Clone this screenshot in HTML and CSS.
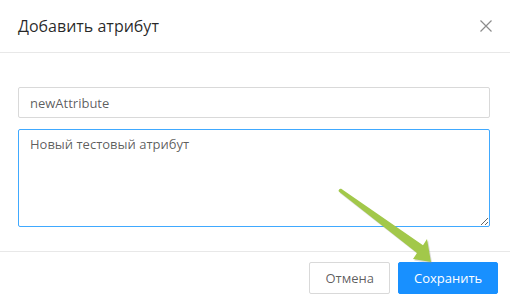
FILE: index.html
```html
<!DOCTYPE html>
<html lang="ru">
<head>
<meta charset="utf-8">
<link rel="stylesheet" href="styles.css">
</head>
<body>
<div class="modal">
  <div class="modal-header">
    <div class="modal-title">Добавить атрибут</div>
    <button class="modal-close" aria-label="Закрыть">
      <svg width="12" height="12" viewBox="0 0 12 12"><path d="M0.5 0.5L11.5 11.5M11.5 0.5L0.5 11.5" stroke="#8c8c8c" stroke-width="1.2" fill="none"/></svg>
    </button>
  </div>
  <div class="modal-body">
    <input class="field" type="text" value="newAttribute">
    <textarea class="field area">Новый тестовый атрибут</textarea>
  </div>
  <div class="modal-footer">
    <button class="btn">Отмена</button>
    <button class="btn btn-primary">Сохранить</button>
  </div>
  <svg class="arrow" width="510" height="299" viewBox="0 0 510 299">
    <path transform="translate(1.2,1.6)" opacity="0.3" fill="#8a8a8a" d="M341.2 188.8 L423 245.2 L427 239 L431 262 L413 259 L417 252.9 L338.8 191.6 A2 2 0 0 1 341.2 188.8 Z"/>
    <path fill="#a2c84a" d="M341.2 188.8 L423 245.2 L427 239 L431 262 L413 259 L417 252.9 L338.8 191.6 A2 2 0 0 1 341.2 188.8 Z"/>
  </svg>
</div>
</body>
</html>
```
FILE: styles.css
```css
html, body {
  margin: 0;
  padding: 0;
  background: #fff;
}
body {
  font-family: "Open Sans", "Noto Sans", sans-serif;
  font-size: 13px;
  color: rgba(0, 0, 0, 0.65);
}
.modal {
  position: relative;
  width: 510px;
  height: 299px;
  display: flex;
  flex-direction: column;
}
.modal-header {
  height: 53px;
  box-sizing: border-box;
  border-bottom: 1px solid #e8e8e8;
  display: flex;
  align-items: center;
  justify-content: space-between;
  padding: 0 18px 0 18px;
}
.modal-title {
  font-size: 16px;
  color: rgba(0, 0, 0, 0.85);
}
.modal-close {
  border: 0;
  background: none;
  padding: 0;
  width: 12px;
  height: 12px;
  display: flex;
}
.modal-body {
  padding: 34px 20px 0 18px;
  display: flex;
  flex-direction: column;
  gap: 11px;
  height: 199px;
  box-sizing: border-box;
  border-bottom: 1px solid #e8e8e8;
}
.field {
  font-family: inherit;
  font-size: 13px;
  color: rgba(0, 0, 0, 0.65);
  border: 1px solid #d9d9d9;
  border-radius: 2px;
  box-sizing: border-box;
  margin: 0;
  outline: none;
  background: #fff;
}
input.field {
  height: 31px;
  padding: 0 11px;
}
.area {
  height: 98px;
  padding: 4px 11px;
  border-color: #40a9ff;
  resize: vertical;
  line-height: 20px;
}
.modal-footer {
  flex: 1;
  display: flex;
  justify-content: flex-end;
  align-items: flex-start;
  gap: 8px;
  padding: 10px 12px 0 0;
}
.btn {
  font-family: inherit;
  font-size: 13px;
  height: 32px;
  padding: 0 15px;
  border: 1px solid #d9d9d9;
  border-radius: 2px;
  background: #fff;
  color: rgba(0, 0, 0, 0.65);
}
.btn-primary {
  background: #1890ff;
  border-color: #1890ff;
  color: #fff;
  width: 100px;
}
.arrow {
  position: absolute;
  left: 0;
  top: 0;
  pointer-events: none;
}
```
